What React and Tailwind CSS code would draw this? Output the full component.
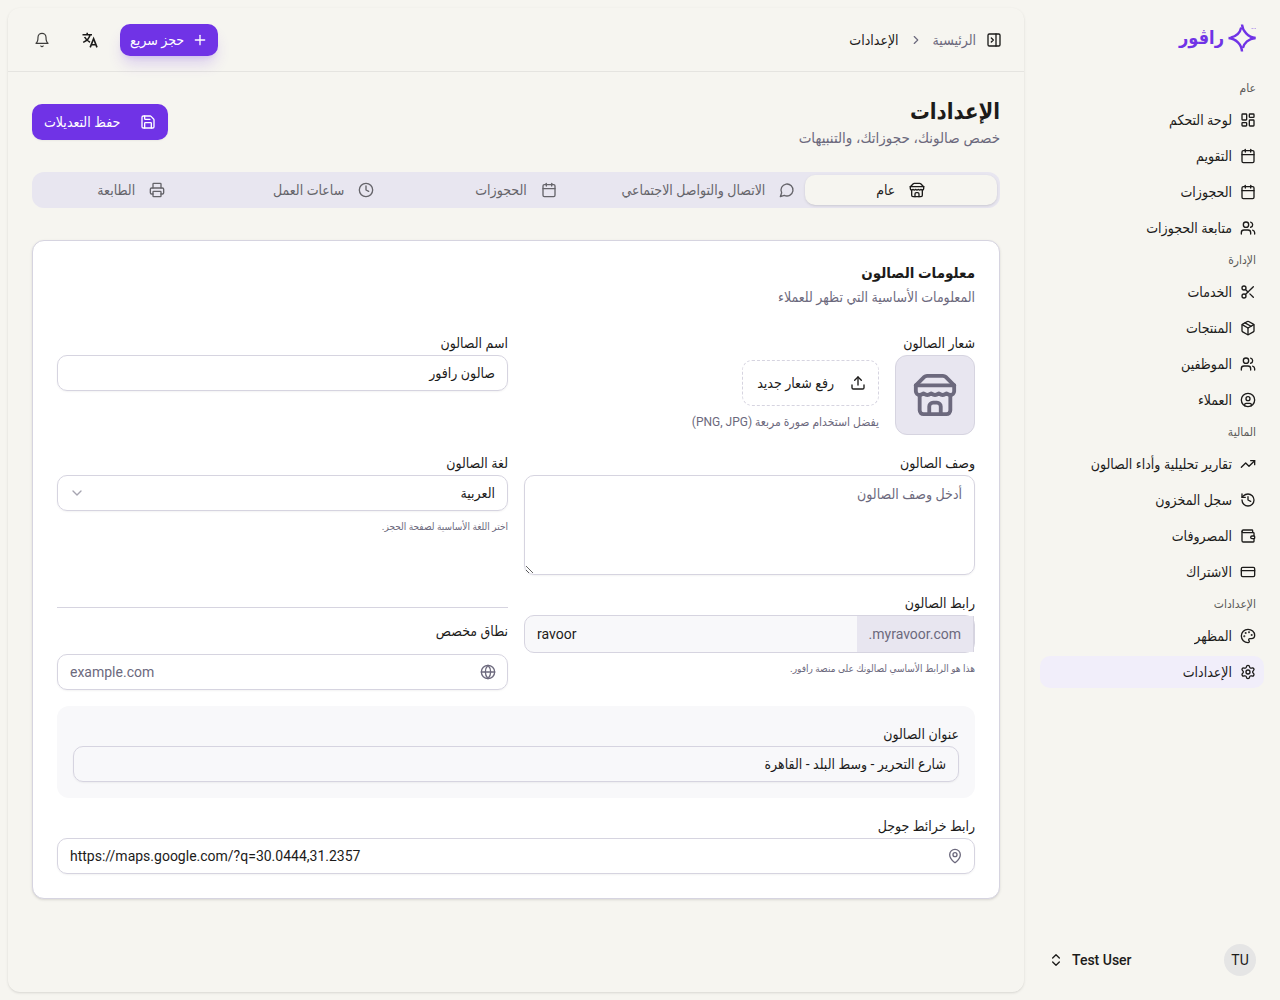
import {
  Calendar,
  ChevronDown,
  ChevronRight,
  ChevronsUpDown,
  CircleUser,
  Clock,
  CreditCard,
  Globe,
  History,
  LayoutDashboard,
  MapPin,
  Package,
  Palette,
  PanelRightClose,
  Plus,
  Printer,
  Save,
  Scissors,
  Settings,
  TrendingUp,
  Upload,
  Users,
  Wallet,
} from 'lucide-react'

function Icon({ className, strokeWidth = 2, children }) {
  return (
    <svg
      viewBox="0 0 24 24"
      fill="none"
      stroke="currentColor"
      strokeWidth={strokeWidth}
      strokeLinecap="round"
      strokeLinejoin="round"
      className={className}
    >
      {children}
    </svg>
  )
}

function StoreIcon({ className }) {
  return (
    <Icon className={className}>
      <path d="m2 7 4.41-4.41A2 2 0 0 1 7.83 2h8.34a2 2 0 0 1 1.42.59L22 7" />
      <path d="M4 12v8a2 2 0 0 0 2 2h12a2 2 0 0 0 2-2v-8" />
      <path d="M15 22v-4a2 2 0 0 0-2-2h-2a2 2 0 0 0-2 2v4" />
      <path d="M2 7h20" />
      <path d="M22 7v3a2 2 0 0 1-2 2a2.7 2.7 0 0 1-1.59-.63.7.7 0 0 0-.82 0A2.7 2.7 0 0 1 16 12a2.7 2.7 0 0 1-1.59-.63.7.7 0 0 0-.82 0A2.7 2.7 0 0 1 12 12a2.7 2.7 0 0 1-1.59-.63.7.7 0 0 0-.82 0A2.7 2.7 0 0 1 8 12a2.7 2.7 0 0 1-1.59-.63.7.7 0 0 0-.82 0A2.7 2.7 0 0 1 4 12a2 2 0 0 1-2-2V7" />
    </Icon>
  )
}

function BubbleIcon({ className }) {
  return (
    <Icon className={className}>
      <path d="M7.9 20A9 9 0 1 0 4 16.1L2 22Z" />
    </Icon>
  )
}

function BellIcon({ className }) {
  return (
    <Icon className={className} strokeWidth={1.8}>
      <path d="M6 8a6 6 0 0 1 12 0c0 7 3 9 3 9H3s3-2 3-9" />
      <path d="M10.3 21a1.94 1.94 0 0 0 3.4 0" />
    </Icon>
  )
}

function TranslateIcon({ className }) {
  return (
    <svg viewBox="0 0 16 16" fill="none" stroke="currentColor" strokeWidth="1.6" className={className}>
      <path d="M0.5 2.8h9.5M5.2 0.8v2M8 2.8C7.4 6 4.6 8.8 1.2 10.4M2.6 5C3.8 7.4 5.6 9 8 10.2" />
      <path d="M8.2 15.4l3.4-8.6 3.4 8.6M9.4 12.8h4.4" />
    </svg>
  )
}

const navGroups = [
  {
    label: 'عام',
    items: [
      { title: 'لوحة التحكم', icon: LayoutDashboard },
      { title: 'التقويم', icon: Calendar },
      { title: 'الحجوزات', icon: Calendar },
      { title: 'متابعة الحجوزات', icon: Users },
    ],
  },
  {
    label: 'الإدارة',
    items: [
      { title: 'الخدمات', icon: Scissors },
      { title: 'المنتجات', icon: Package },
      { title: 'الموظفين', icon: Users },
      { title: 'العملاء', icon: CircleUser },
    ],
  },
  {
    label: 'المالية',
    items: [
      { title: 'تقارير تحليلية وأداء الصالون', icon: TrendingUp },
      { title: 'سجل المخزون', icon: History },
      { title: 'المصروفات', icon: Wallet },
      { title: 'الاشتراك', icon: CreditCard },
    ],
  },
  {
    label: 'الإعدادات',
    items: [
      { title: 'المظهر', icon: Palette },
      { title: 'الإعدادات', icon: Settings, active: true },
    ],
  },
]

const tabs = [
  { title: 'عام', icon: StoreIcon, active: true },
  { title: 'الاتصال والتواصل الاجتماعي', icon: BubbleIcon },
  { title: 'الحجوزات', icon: Calendar },
  { title: 'ساعات العمل', icon: Clock },
  { title: 'الطابعة', icon: Printer },
]

const inputClass =
  'block h-9 w-full rounded-[10px] border border-[#d6d4e0] bg-transparent px-3 text-sm shadow-xs outline-none placeholder:text-[#6c697d]'

function Logo() {
  return (
    <a href="#" className="flex items-center gap-1 text-[#7033e6]">
      <svg viewBox="0 0 28 28" className="size-7" fill="none" stroke="currentColor" strokeWidth="2.4">
        <path d="M14 0.5C14.6 7 20 13.2 27.5 14" />
        <path d="M27.5 14C20.5 14.6 16 19 14.9 24" />
        <path d="M14 27.5C13.6 20.5 8 14.6 0.5 14" />
        <path d="M2.5 13.6C8 12.4 12.2 8.4 13.2 3.5" />
        <path d="M23.5 4.5h2M26.5 4.5h1.5" strokeWidth="1" opacity="0.4" />
      </svg>
      <span className="text-lg leading-7 font-bold">راڤور</span>
    </a>
  )
}

function Sidebar() {
  return (
    <aside className="flex w-64 shrink-0 flex-col px-4 py-2">
      <div className="flex h-16 items-center px-2 pb-1">
        <Logo />
      </div>
      <nav className="flex-1">
        {navGroups.map((group) => (
          <div key={group.label}>
            <div className="flex h-8 items-center px-2 text-xs text-[#5c5b59]">{group.label}</div>
            <ul className="space-y-1">
              {group.items.map((item) => (
                <li key={item.title}>
                  <a
                    href="#"
                    className={
                      item.active
                        ? 'flex h-8 items-center gap-2 rounded-[10px] bg-[#f1eefa] px-2 text-sm font-medium'
                        : 'flex h-8 items-center gap-2 rounded-[10px] px-2 text-sm'
                    }
                  >
                    <item.icon className="size-4 shrink-0" />
                    <span className="truncate">{item.title}</span>
                  </a>
                </li>
              ))}
            </ul>
          </div>
        ))}
      </nav>
      <button type="button" className="mb-2 flex h-12 items-center gap-2 px-2 text-sm font-medium">
        <span className="flex size-8 items-center justify-center rounded-full bg-[#e5e5e5] font-normal">TU</span>
        <span className="flex-1 text-left">Test User</span>
        <ChevronsUpDown className="size-4" />
      </button>
    </aside>
  )
}

function Header() {
  return (
    <header className="flex h-16 shrink-0 items-center justify-between border-b border-[#e5e4e0] px-4">
      <div className="flex items-center gap-1">
        <button type="button" aria-label="القائمة" className="flex size-7 items-center justify-center">
          <PanelRightClose className="size-4" />
        </button>
        <nav className="flex items-center gap-2.5 text-sm">
          <a href="#" className="text-[#6c697d]">الرئيسية</a>
          <ChevronRight className="size-3.5 text-[#6c697d]" />
          <span>الإعدادات</span>
        </nav>
      </div>
      <div className="flex items-center gap-3">
        <button
          type="button"
          className="flex h-8 items-center gap-2 rounded-[10px] bg-[#7033e6] px-2.5 text-sm font-medium text-white shadow-lg shadow-[#7033e6]/20"
        >
          <Plus className="size-4" />
          حجز سريع
        </button>
        <button type="button" aria-label="اللغة" className="flex size-9 items-center justify-center">
          <TranslateIcon className="size-4" />
        </button>
        <button type="button" aria-label="التنبيهات" className="flex size-9 items-center justify-center">
          <BellIcon className="size-4 text-[#3f3e3c]" />
        </button>
      </div>
    </header>
  )
}

function Field({ id, label, children }) {
  return (
    <div>
      <label htmlFor={id} className="flex h-6 items-center text-sm font-medium">{label}</label>
      {children}
    </div>
  )
}

function SalonInfo() {
  return (
    <section className="rounded-xl border border-[#d6d4e0] bg-white p-6 shadow-sm">
      <h2 className="text-[15px] leading-4 font-semibold">معلومات الصالون</h2>
      <p className="mt-1.5 text-sm text-[#6c697d]">المعلومات الأساسية التي تظهر للعملاء</p>

      <div className="mt-6 grid grid-cols-2 gap-4">
        <Field id="logo" label="شعار الصالون">
          <div className="flex items-center gap-4">
            <div className="flex size-20 items-center justify-center rounded-xl border border-[#d6d4e0] bg-[#e8e6f0] p-4">
              <StoreIcon className="size-full text-[#6c697d]" />
            </div>
            <div>
              <button
                id="logo"
                type="button"
                className="flex h-[46px] min-w-[137px] items-center gap-4 rounded-[10px] border border-dashed border-[#d6d4e0] px-3 text-sm font-medium"
              >
                <Upload className="size-4" />
                رفع شعار جديد
              </button>
              <p className="mt-2 text-xs text-[#6c697d]">يفضل استخدام صورة مربعة (PNG, JPG)</p>
            </div>
          </div>
        </Field>

        <Field id="name" label="اسم الصالون">
          <input id="name" type="text" defaultValue="صالون رافور" className={inputClass} />
        </Field>

        <Field id="description" label="وصف الصالون">
          <textarea
            id="description"
            placeholder="أدخل وصف الصالون"
            className="block h-[100px] w-full rounded-[10px] border border-[#d6d4e0] px-3 py-2 text-sm shadow-xs outline-none placeholder:text-[#6c697d]"
          />
        </Field>

        <Field id="language" label="لغة الصالون">
          <div className="relative">
            <select id="language" className={`${inputClass} appearance-none`}>
              <option>العربية</option>
            </select>
            <ChevronDown className="pointer-events-none absolute top-2.5 left-3 size-4 text-[#6c697d] opacity-60" />
          </div>
          <p className="mt-2 text-[10px] leading-4 text-[#6c697d]">اختر اللغة الأساسية لصفحة الحجز.</p>
        </Field>

        <Field id="slug" label="رابط الصالون">
          <div className="flex rounded-[10px] border border-[#d6d4e0] bg-[#f8f8fa]">
            <span dir="ltr" className="flex h-9 items-center border-r border-[#d6d4e0] bg-[#e8e6f0] px-3 text-sm text-[#6c697d]">
              .myravoor.com
            </span>
            <input
              id="slug"
              dir="ltr"
              type="text"
              defaultValue="ravoor"
              className="h-9 min-w-0 flex-1 rounded-[10px] bg-transparent px-3 text-sm outline-none"
            />
          </div>
          <p className="mt-2 text-[10px] leading-4 text-[#6c697d]">هذا هو الرابط الأساسي لصالونك على منصة رافور.</p>
        </Field>

        <div className="mt-4 space-y-4 border-t border-[#d6d4e0] pt-4">
          <label htmlFor="domain" className="block text-sm leading-[14px] font-medium">نطاق مخصص</label>
          <div className="relative">
            <input id="domain" dir="ltr" type="text" placeholder="example.com" className={inputClass} />
            <Globe className="pointer-events-none absolute top-2.5 right-3 size-4 text-[#6c697d]" />
          </div>
        </div>

        <div className="col-span-2 rounded-xl bg-[#f8f8fa] p-4">
          <Field id="address" label="عنوان الصالون">
            <input id="address" type="text" defaultValue="شارع التحرير - وسط البلد - القاهرة" className={inputClass} />
          </Field>
        </div>

        <div className="col-span-2">
          <Field id="maps" label="رابط خرائط جوجل">
            <div className="relative">
              <input
                id="maps"
                dir="ltr"
                type="text"
                defaultValue="https://maps.google.com/?q=30.0444,31.2357"
                className={inputClass}
              />
              <MapPin className="pointer-events-none absolute top-2.5 right-3 size-4 text-[#6c697d]" />
            </div>
          </Field>
        </div>
      </div>
    </section>
  )
}

export default function App() {
  return (
    <div
      dir="rtl"
      className="flex min-h-screen bg-[#f6f5f0] font-['Roboto','DejaVu_Sans_Condensed','DejaVu_Sans',sans-serif] text-[#1c1b1a]"
    >
      <Sidebar />
      <div className="my-2 ml-2 flex min-w-0 flex-1 flex-col rounded-xl shadow-sm">
        <Header />
        <main className="p-6">
          <div className="flex items-center justify-between">
            <div>
              <h1 className="text-[22px] leading-8 font-bold">الإعدادات</h1>
              <p className="text-[15px] leading-5 text-[#6c697d]">خصص صالونك، حجوزاتك، والتنبيهات</p>
            </div>
            <button
              type="button"
              className="flex h-9 items-center gap-5 rounded-[10px] bg-[#7033e6] px-3 text-sm font-medium text-white shadow-xs"
            >
              <Save className="size-4" />
              حفظ التعديلات
            </button>
          </div>

          <div role="tablist" className="mt-6 mb-8 grid h-9 grid-cols-5 rounded-xl bg-[#e8e6f0] p-[3px]">
            {tabs.map((tab) => (
              <button
                key={tab.title}
                type="button"
                role="tab"
                aria-selected={!!tab.active}
                className={
                  tab.active
                    ? 'flex items-center justify-center gap-3.5 rounded-[10px] bg-[#f6f5f0] text-sm font-medium whitespace-nowrap shadow-sm'
                    : 'flex items-center justify-center gap-3.5 rounded-[10px] text-sm font-medium whitespace-nowrap text-[#65646a]'
                }
              >
                <tab.icon className="size-4 shrink-0" />
                {tab.title}
              </button>
            ))}
          </div>

          <SalonInfo />
        </main>
      </div>
    </div>
  )
}
